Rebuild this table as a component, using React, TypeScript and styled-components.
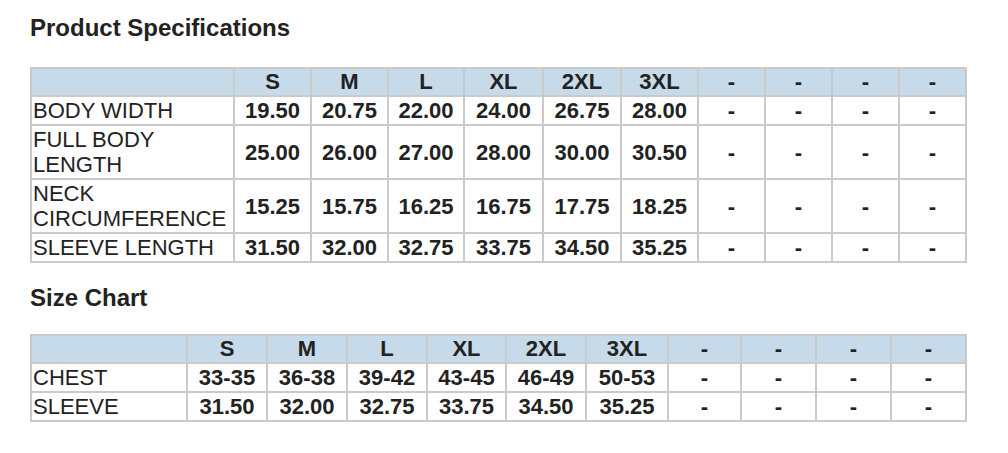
import React from "react";
import styled, { createGlobalStyle } from "styled-components";

const Global = createGlobalStyle`
  html, body { margin: 0; padding: 0; background: #ffffff; }
  body { font-family: "Liberation Sans", Arial, sans-serif; color: #222; }
`;

const Page = styled.div`
  padding: 14px 0 0 30px;
  width: 935px;
`;

const Title = styled.h2<{ $gap: number }>`
  margin: 0 0 ${(p) => p.$gap}px 0;
  font-size: 24px;
  line-height: 27px;
  font-weight: bold;
  color: #222;
`;

const Table = styled.table<{ $after?: number }>`
  width: 935px;
  table-layout: fixed;
  border-collapse: collapse;
  border: 2px solid #cacaca;
  margin-bottom: ${(p) => p.$after ?? 0}px;
`;

const HeadCell = styled.th`
  background: #c6daea;
  border: 2px solid #cacaca;
  height: 26px;
  padding: 0;
  font-size: 22px;
  line-height: 26px;
  font-weight: bold;
  text-align: center;
  color: #222;
`;

const LabelCell = styled.td`
  border: 2px solid #cacaca;
  padding: 1px 0 1px 1px;
  font-size: 22px;
  line-height: 25px;
  text-align: left;
  color: #222;
  white-space: normal;
`;

const ValueCell = styled.td`
  border: 2px solid #cacaca;
  padding: 1px 0;
  font-size: 22px;
  line-height: 25px;
  font-weight: bold;
  text-align: center;
  color: #222;
`;

type Spec = {
  title: string;
  gap: number;
  after: number;
  cols: number[];
  heads: string[];
  rows: { label: string; values: string[] }[];
};

const specs: Spec[] = [
  {
    title: "Product Specifications",
    gap: 26,
    after: 21,
    cols: [203, 77, 77, 76, 79, 78, 77, 67, 67, 67, 67],
    heads: ["S", "M", "L", "XL", "2XL", "3XL", "-", "-", "-", "-"],
    rows: [
      { label: "BODY WIDTH", values: ["19.50", "20.75", "22.00", "24.00", "26.75", "28.00", "-", "-", "-", "-"] },
      { label: "FULL BODY LENGTH", values: ["25.00", "26.00", "27.00", "28.00", "30.00", "30.50", "-", "-", "-", "-"] },
      { label: "NECK CIRCUMFERENCE", values: ["15.25", "15.75", "16.25", "16.75", "17.75", "18.25", "-", "-", "-", "-"] },
      { label: "SLEEVE LENGTH", values: ["31.50", "32.00", "32.75", "33.75", "34.50", "35.25", "-", "-", "-", "-"] },
    ],
  },
  {
    title: "Size Chart",
    gap: 23,
    after: 0,
    cols: [156, 80, 80, 80, 79, 80, 82, 73, 75, 75, 75],
    heads: ["S", "M", "L", "XL", "2XL", "3XL", "-", "-", "-", "-"],
    rows: [
      { label: "CHEST", values: ["33-35", "36-38", "39-42", "43-45", "46-49", "50-53", "-", "-", "-", "-"] },
      { label: "SLEEVE", values: ["31.50", "32.00", "32.75", "33.75", "34.50", "35.25", "-", "-", "-", "-"] },
    ],
  },
];

export default function App() {
  return (
    <>
      <Global />
      <Page>
        {specs.map((s) => (
          <section key={s.title}>
            <Title $gap={s.gap}>{s.title}</Title>
            <Table $after={s.after}>
              <colgroup>
                {s.cols.map((w, i) => (
                  <col key={i} style={{ width: w }} />
                ))}
              </colgroup>
              <thead>
                <tr>
                  <HeadCell />
                  {s.heads.map((h, i) => (
                    <HeadCell key={i}>{h}</HeadCell>
                  ))}
                </tr>
              </thead>
              <tbody>
                {s.rows.map((r) => (
                  <tr key={r.label}>
                    <LabelCell>{r.label}</LabelCell>
                    {r.values.map((v, i) => (
                      <ValueCell key={i}>{v}</ValueCell>
                    ))}
                  </tr>
                ))}
              </tbody>
            </Table>
          </section>
        ))}
      </Page>
    </>
  );
}
